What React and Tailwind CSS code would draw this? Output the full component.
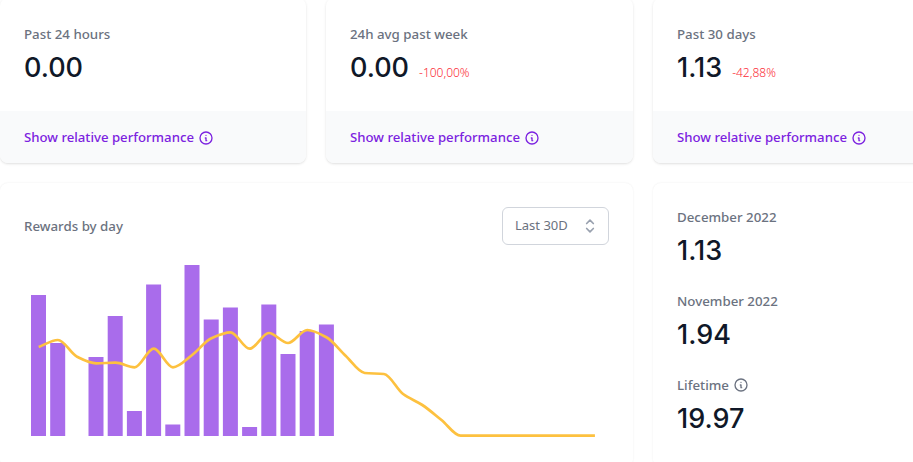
import { HiOutlineInformationCircle, HiOutlineSelector } from "react-icons/hi";

const bars = [
  [31, 295], [50.2, 343], [88.5, 357], [107.7, 316], [126.9, 411], [146.1, 284.5], [165.3, 424.5],
  [184.5, 265], [203.7, 319.5], [222.9, 307.5], [242.1, 427], [261.3, 304.5], [280.5, 354], [299.7, 331], [318.9, 324.5],
];

const rewards = [
  347, 340, 356.7, 363.3, 362.7, 367.3, 348.7, 367.3, 355, 338.3, 332.3, 348.7, 333, 343, 330, 337.3,
  355.7, 373, 374, 394, 405, 420, 435.7, 435.7, 435.7, 435.7, 435.7, 435.7, 435.7, 435.7,
];

// monotone cubic, so flat stretches don't overshoot
function linePath(ys) {
  const step = 19.18;
  const slopes = ys.slice(1).map((y, i) => (y - ys[i]) / step);
  const tangents = ys.map((_, i) => {
    const a = slopes[i - 1] ?? slopes[i];
    const b = slopes[i] ?? slopes[i - 1];
    return a * b <= 0 ? 0 : (2 * a * b) / (a + b);
  });
  let d = `M38.7 ${ys[0]}`;
  for (let i = 0; i < ys.length - 1; i++) {
    const x = 38.7 + step * i;
    const third = step / 3;
    d += ` C${x + third} ${ys[i] + tangents[i] * third} ${x + step - third} ${ys[i + 1] - tangents[i + 1] * third} ${x + step} ${ys[i + 1]}`;
  }
  return d;
}

function StatCard({ label, value, delta }) {
  return (
    <div className="bg-white rounded-lg shadow overflow-hidden">
      <div className="h-[113px] px-6 pt-[26px]">
        <p className="text-[13.3px] leading-5 font-medium text-[#6b7280]">{label}</p>
        <div className="flex items-baseline mt-[6px]">
          <span className="font-['Inter',sans-serif] text-[27px] leading-9 font-medium text-gray-900">{value}</span>
          {delta && <span className="ml-[10px] text-xs font-light text-red-500">{delta}</span>}
        </div>
      </div>
      <div className="h-[52px] px-6 pt-[2px] bg-gray-50 flex items-center gap-1 text-[13.2px] font-medium text-[#7c22e0]">
        Show relative performance
        <HiOutlineInformationCircle className="w-4 h-4" />
      </div>
    </div>
  );
}

function MonthStat({ label, value, info }) {
  return (
    <div>
      <p className="flex items-center gap-1 text-[13.3px] leading-5 font-medium text-[#6b7280]">
        {label}
        {info && <HiOutlineInformationCircle className="w-4 h-4" />}
      </p>
      <p className="mt-[6px] font-['Inter',sans-serif] text-[27px] leading-9 font-medium text-gray-900">{value}</p>
    </div>
  );
}

export default function App() {
  return (
    <div className="h-[462px] w-[913px] overflow-hidden bg-white font-['Noto_Sans',sans-serif]">
      <div className="-mt-[2px] grid grid-cols-[306px_307px_307px] gap-5">
        <StatCard label="Past 24 hours" value="0.00" />
        <StatCard label="24h avg past week" value="0.00" delta="-100,00%" />
        <StatCard label="Past 30 days" value="1.13" delta="-42,88%" />

        <div className="col-span-2 h-[284px] bg-white rounded-lg shadow-[0_0_2px_rgba(0,0,0,0.08)] p-6">
          <div className="flex items-center justify-between">
            <h3 className="text-[13.3px] font-medium text-[#6b7280] pt-[1px]">Rewards by day</h3>
            <div className="w-[107px] h-[38px] pl-3 pr-2 flex items-center justify-between bg-white border border-gray-300 rounded-md text-[13px] text-[#6b7280]">
              Last 30D
              <HiOutlineSelector className="w-5 h-5 text-gray-400" />
            </div>
          </div>
          <svg viewBox="24 253 585 200" className="w-[585px] h-[200px] mt-2">
            {bars.map(([x, top]) => (
              <rect key={x} x={x} y={top} width="15" height={436 - top} fill="#a96ceb" />
            ))}
            <path d={linePath(rewards)} fill="none" stroke="#fdc13f" strokeWidth="2.7" />
          </svg>
        </div>

        <div className="h-[284px] bg-white rounded-lg shadow-[0_0_2px_rgba(0,0,0,0.08)] px-6 pt-6 flex flex-col gap-[22px]">
          <MonthStat label="December 2022" value="1.13" />
          <MonthStat label="November 2022" value="1.94" />
          <MonthStat label="Lifetime" value="19.97" info />
        </div>
      </div>
    </div>
  );
}
